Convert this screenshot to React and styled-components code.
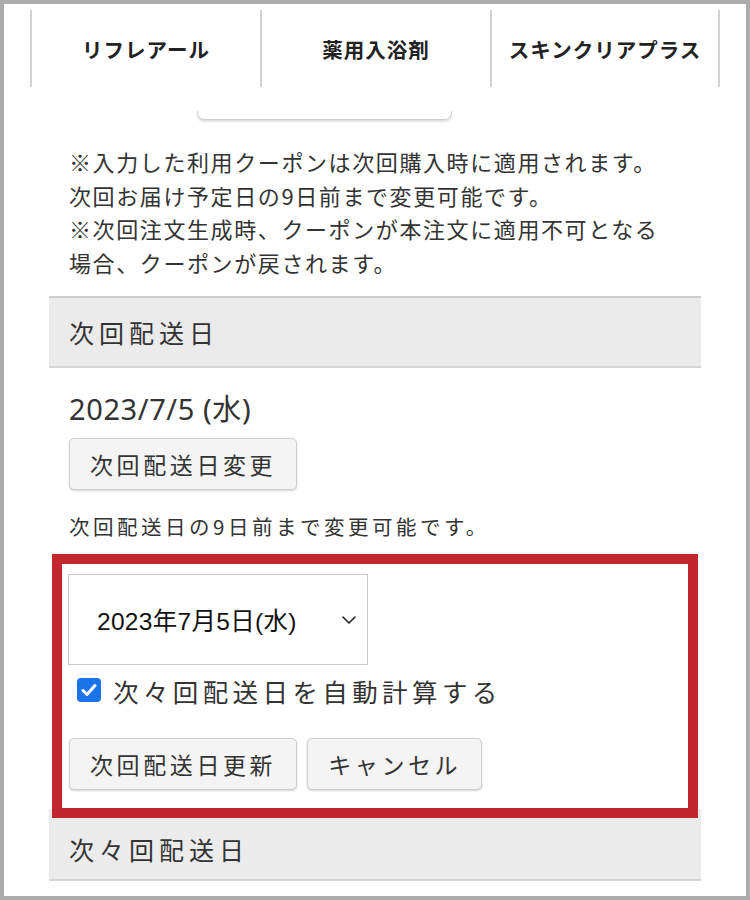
import React from "react";
import styled, { createGlobalStyle } from "styled-components";

const Global = createGlobalStyle`
  html, body { margin: 0; padding: 0; background: #fff; }
  body { font-family: "Noto Sans CJK JP", "Noto Sans", sans-serif; color: #333; }
  * { box-sizing: border-box; }
`;

const Frame = styled.div`
  width: 750px;
  height: 900px;
  border: 4px solid #ababab;
  background: #fff;
  overflow: hidden;
`;

const TabBar = styled.nav`
  display: flex;
  margin: 6px 0 0 26px;
  height: 77px;
`;

const Tab = styled.div`
  width: 230px;
  display: flex;
  align-items: center;
  justify-content: center;
  border-left: 2px solid #d2d2d2;
  ${(p) => (p.$last ? "border-right: 2px solid #d2d2d2;" : "")}
  font-size: 20.5px;
  font-weight: 700;
  letter-spacing: 1px;
  color: #222;
`;

const Column = styled.main`
  margin-left: 45px;
  width: 652px;
  display: flex;
  flex-direction: column;
`;

const ButtonStub = styled.div`
  margin: 24px 0 0 148px;
  width: 255px;
  height: 9px;
  border: 1px solid #cfcfcf;
  border-top: none;
  border-radius: 0 0 7px 7px;
  box-shadow: 0 2px 2px rgba(0, 0, 0, 0.12);
`;

const Notice = styled.p`
  margin: 25px 0 0;
  padding: 0 20px;
  font-size: 22px;
  line-height: 33.5px;
  letter-spacing: 1.6px;
  color: #333;
`;

const SectionHead = styled.h2`
  margin: ${(p) => p.$top}px 0 0;
  height: 72px;
  padding: 0 20px;
  display: flex;
  align-items: center;
  padding-top: ${(p) => p.$shift || 0}px;
  background: #ebebeb;
  border-top: 2px solid ${(p) => (p.$noTop ? "#ebebeb" : "#cdcdcd")};
  border-bottom: 2px solid #d5d5d5;
  font-size: 25px;
  font-weight: 400;
  letter-spacing: 5px;
  color: #333;
`;

const DateText = styled.div`
  margin: 20px 0 0 20px;
  font-family: "Noto Sans", "Noto Sans CJK JP", sans-serif;
  font-size: 29px;
  line-height: 42px;
  letter-spacing: 0.6px;
  color: #333;
`;

const Btn = styled.button`
  height: 52px;
  padding: 0 20px;
  background: #f4f4f4;
  border: 1px solid #cfcfcf;
  border-radius: 5px;
  box-shadow: 0 1px 2px rgba(0, 0, 0, 0.18);
  font-family: "Noto Sans CJK JP", sans-serif;
  font-size: 23px;
  letter-spacing: 3.6px;
  color: #333;
  cursor: pointer;
`;

const BtnWrap = styled.div`
  display: flex;
  gap: 10px;
  margin: ${(p) => p.$top}px 0 0 ${(p) => p.$left}px;
`;

const Note = styled.div`
  margin: 21px 0 0 20px;
  font-size: 20.5px;
  line-height: 30px;
  letter-spacing: 3.5px;
  color: #333;
`;

const Highlight = styled.section`
  position: relative;
  z-index: 1;
  margin: 13px 3px -9px;
  border: 10px solid #c1272d;
  background: #fff;
  padding: 10px 7px 18px;
  display: flex;
  flex-direction: column;
`;

const Select = styled.div`
  width: 300px;
  height: 91px;
  margin-left: -1px;
  border: 1.5px solid #c9c9c9;
  display: flex;
  align-items: center;
  justify-content: space-between;
  padding: 0 10px 0 28px;
  font-family: "Liberation Sans", Arial, "Noto Sans CJK JP", sans-serif;
  font-size: 24.5px;
  letter-spacing: 0.3px;
  color: #111;
`;

const CheckRow = styled.label`
  display: flex;
  align-items: center;
  gap: 12px;
  margin: 6px 0 0 8px;
  height: 38px;
  font-size: 25.5px;
  letter-spacing: 4.4px;
  color: #333;
`;

const Box = styled.span`
  width: 24px;
  height: 24px;
  border-radius: 4px;
  background: #1a73e8;
  display: flex;
  align-items: center;
  justify-content: center;
`;

export default function App() {
  return (
    <>
      <Global />
      <Frame>
        <TabBar>
          <Tab>リフレアール</Tab>
          <Tab>薬用入浴剤</Tab>
          <Tab $last>スキンクリアプラス</Tab>
        </TabBar>
        <Column>
          <ButtonStub />
          <Notice>
            ※入力した利用クーポンは次回購入時に適用されます。
            <br />
            次回お届け予定日の9日前まで変更可能です。
            <br />
            ※次回注文生成時、クーポンが本注文に適用不可となる
            <br />
            場合、クーポンが戻されます。
          </Notice>
          <SectionHead $top={17}>次回配送日</SectionHead>
          <DateText>2023/7/5 (水)</DateText>
          <BtnWrap $top={8} $left={20}>
            <Btn>次回配送日変更</Btn>
          </BtnWrap>
          <Note>次回配送日の9日前まで変更可能です。</Note>
          <Highlight>
            <Select>
              <span>2023年7月5日(水)</span>
              <svg width="16" height="10" viewBox="0 0 16 10">
                <path d="M2 2l6 6 6-6" fill="none" stroke="#222" strokeWidth="1.6" strokeLinecap="round" strokeLinejoin="round" />
              </svg>
            </Select>
            <CheckRow>
              <Box>
                <svg width="16" height="14" viewBox="0 0 16 14">
                  <path d="M2 7.5l4 4L14 2.5" fill="none" stroke="#fff" strokeWidth="3" strokeLinecap="round" strokeLinejoin="round" />
                </svg>
              </Box>
              次々回配送日を自動計算する
            </CheckRow>
            <BtnWrap $top={29} $left={0}>
              <Btn>次回配送日更新</Btn>
              <Btn>キャンセル</Btn>
            </BtnWrap>
          </Highlight>
          <SectionHead $top={0} $shift={8} $noTop>次々回配送日</SectionHead>
        </Column>
      </Frame>
    </>
  );
}
